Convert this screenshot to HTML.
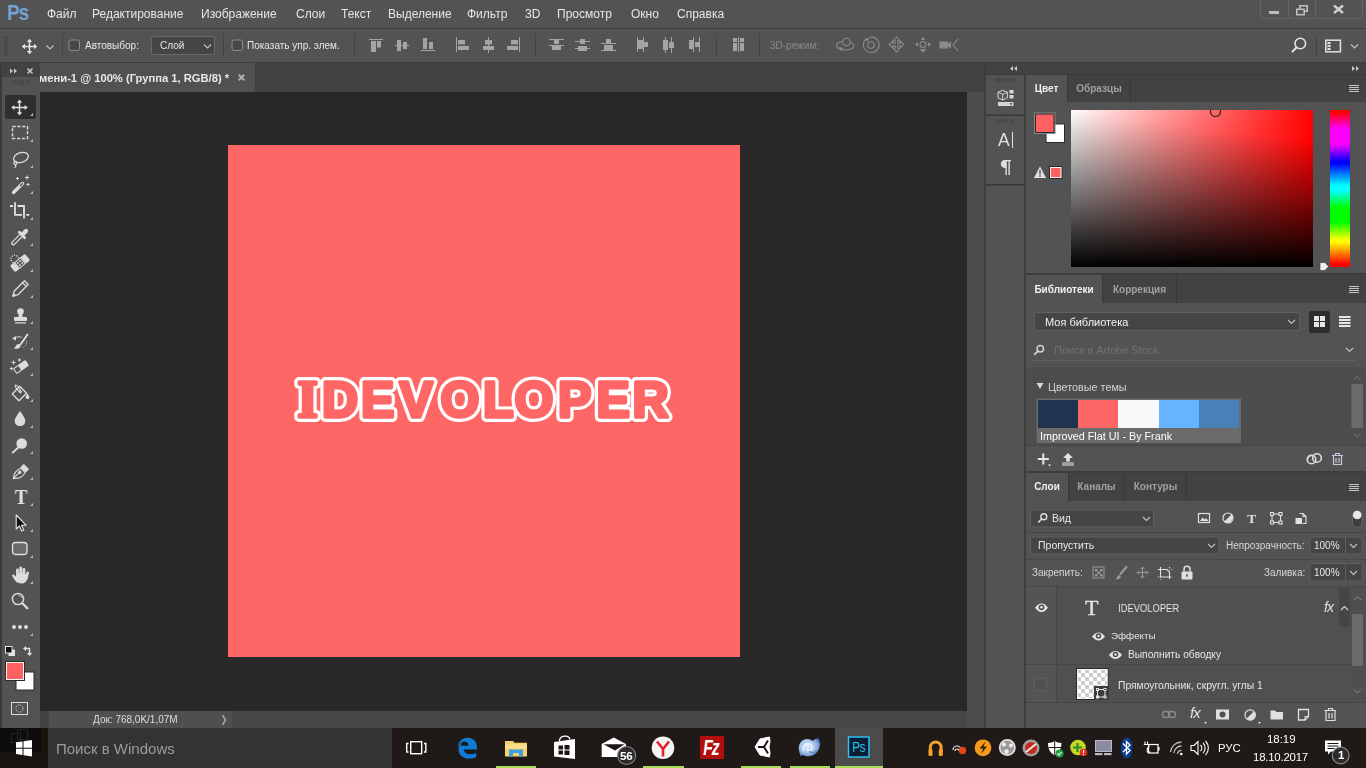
<!DOCTYPE html>
<html lang="ru"><head><meta charset="utf-8"><title>Photoshop</title>
<style>
*{box-sizing:border-box;margin:0;padding:0}
html,body{width:1366px;height:768px;overflow:hidden;background:#535353;font-family:"Liberation Sans","DejaVu Sans",sans-serif;color:#dcdcdc;font-size:11px}
.abs{position:absolute}
svg{display:block;overflow:visible}
#app{position:relative;width:1366px;height:768px;overflow:hidden;background:#535353}
.t,#menubar span,.ptab,#pslogo,#status .info span{will-change:transform}
.t{position:absolute;white-space:nowrap;line-height:1}
/* menu bar */
#menubar{left:0;top:0;width:1366px;height:29px;background:#535353;border-bottom:1px solid #3c3c3c}
#menubar span{position:absolute;top:7px;font-size:12px;color:#e6e6e6;white-space:nowrap;line-height:14px}
#pslogo{position:absolute;left:6.8px;top:1px;font-size:21.5px;font-weight:bold;color:#76a5d6;letter-spacing:-1px;line-height:24px;transform:scaleX(.88);transform-origin:0 0}
/* options bar */
#optbar{left:0;top:29px;width:1366px;height:34px;background:#535353;border-bottom:1px solid #3c3c3c}
#optbar .t{top:12px;font-size:10px;color:#e6e6e6}
.sep{position:absolute;width:1px;background:#464646;top:5px;height:23px}
.cb{position:absolute;width:11px;height:11px;border:1px solid #8a8a8a;border-radius:2px;background:#4a4a4a}
/* document */
#tabbar{left:0;top:63px;width:985px;height:29px;background:#424242}
#doctab{left:40px;top:63px;width:215px;height:29px;background:#515151}
#doctab .t{left:-1px;top:10px;font-size:11.2px;font-weight:bold;color:#e8e8e8}
#canvasarea{left:40px;top:92px;width:927px;height:619px;background:#282828}
#vscroll{left:967px;top:92px;width:17px;height:636px;background:#4c4c4c}
#doc{left:228px;top:145px;width:512px;height:512px;background:#ff6666}
#status{left:40px;top:711px;width:927px;height:17px;background:#474747}
#status .info{position:absolute;left:9px;top:0;width:183px;height:17px;background:#4f4f4f}
#status .info span{position:absolute;left:44px;top:4px;font-size:10px;line-height:10px;color:#dcdcdc;white-space:nowrap}
/* tools */
#tools{left:2px;top:64px;width:38px;height:664px;background:#535353}
#toolshead{left:2px;top:64px;width:38px;height:13px;background:#424242;border-radius:3px 3px 0 0}
/* right dock */
#dockhead{left:986px;top:63px;width:380px;height:12px;background:#424242}
#iconcol{left:986px;top:75px;width:38px;height:653px;background:#535353}
#dockgap{left:984px;top:63px;width:2px;height:665px;background:#3e3e3e}
#dockgap2{left:1024px;top:75px;width:2px;height:653px;background:#3e3e3e}
.panel{left:1026px;width:340px;background:#535353}
.ptabs{position:absolute;left:0;top:0;width:340px;height:27px;background:#424242}
.ptab{position:absolute;top:0;height:27px;font-size:10px;line-height:12px;font-weight:bold;color:#a0a0a0;border-right:1px solid #383838;padding-top:8px;text-align:center;white-space:nowrap}
.ptab.act{background:#535353;color:#f0f0f0}
/* taskbar */
#taskbar{left:0;top:728px;width:1366px;height:40px;background:#1f1a17}
.pmenu{position:absolute;left:323px;width:10px;height:7px;background:linear-gradient(to bottom,#c4c4c4 0,#c4c4c4 1px,transparent 1px,transparent 2px,#c4c4c4 2px,#c4c4c4 3px,transparent 3px,transparent 4px,#c4c4c4 4px,#c4c4c4 5px,transparent 5px,transparent 6px,#c4c4c4 6px,#c4c4c4 7px)}
</style></head><body><div id="app">
<!-- MENU BAR -->
<div id="menubar" class="abs">
<div id="pslogo">Ps</div>
<span style="left:47px">Файл</span><span style="left:92px">Редактирование</span><span style="left:201px">Изображение</span><span style="left:296px">Слои</span><span style="left:341px">Текст</span><span style="left:388px">Выделение</span><span style="left:467px">Фильтр</span><span style="left:525px">3D</span><span style="left:557px">Просмотр</span><span style="left:631px">Окно</span><span style="left:677px">Справка</span>
<svg class="abs" style="left:1255px;top:0" width="111" height="22" viewBox="1255 0 111 22" fill="none">
 <path d="M1260.500 -1v15q0 4.500 4.500 4.500h93q4.500 0 4.500-4.500v-15" stroke="#646464" stroke-width="1"/>
 <path d="M1288.500 0v18M1315.500 0v18" stroke="#646464" stroke-width="1"/>
 <rect x="1269" y="11" width="10" height="3" fill="#bdbdbd"/>
 <g stroke="#bdbdbd" stroke-width="1.600"><rect x="1299.800" y="5.800" width="7.400" height="5.400"/><rect x="1296.800" y="9.300" width="7.400" height="5.400" fill="#535353"/></g>
 <path d="M1334 5.500l9 7.500M1343 5.500l-9 7.500" stroke="#d0d0d0" stroke-width="2.400"/>
</svg>
</div>

<!-- OPTIONS BAR -->
<div id="optbar" class="abs">
<svg class="abs" style="left:0;top:0" width="1366" height="33" viewBox="0 29 1366 33" fill="none">
 <!-- grip -->
 <g stroke="#444" stroke-width="1"><path d="M4 36.500h4M4 38.500h4M4 40.500h4M4 42.500h4M4 44.500h4M4 46.500h4M4 48.500h4M4 50.500h4M4 52.500h4M4 54.500h4"/></g>
 <!-- move icon -->
 <g stroke="#e2e2e2" stroke-width="1.500" fill="#e2e2e2">
  <path d="M29.500 41v11M24 46.500h11"/>
  <path d="M29.500 38.700l2.700 3.300h-5.400zM29.500 54.300l2.700-3.300h-5.400zM21.700 46.500l3.300-2.700v5.400zM37.300 46.500l-3.300-2.700v5.400z" stroke="none"/>
 </g>
 <path d="M46.500 45.500l3.500 3.500 3.500-3.500" stroke="#c4c4c4" stroke-width="1.100"/>
 <!-- separators -->
 <g stroke="#444444" stroke-width="1"><path d="M62.500 34v22M223.500 34v22M354.500 34v22M535.500 34v22M716.500 34v22M759.500 34v22M1316.500 35v21"/></g>
 <!-- checkbox 1 -->
 <rect x="69" y="40" width="10.500" height="10.500" rx="2" fill="#474747" stroke="#8c8c8c"/>
 <!-- dropdown -->
 <rect x="151.500" y="36.500" width="63" height="18" rx="2.500" fill="#454545" stroke="#696969"/>
 <path d="M204 44.500l3.500 3.500 3.500-3.500" stroke="#c4c4c4" stroke-width="1.100"/>
 <!-- checkbox 2 -->
 <rect x="232" y="40" width="10.500" height="10.500" rx="2" fill="#474747" stroke="#8c8c8c"/>
 <!-- align icons -->
 <g fill="#a4a4a4">
  <rect x="369" y="39" width="14" height="1"/><rect x="371" y="41" width="5" height="11"/><rect x="377" y="41" width="4" height="6.500"/>
  <rect x="395" y="45" width="14" height="1"/><rect x="397" y="40" width="4" height="11"/><rect x="403" y="42" width="4" height="7"/>
  <rect x="421" y="50" width="14" height="1"/><rect x="423" y="38" width="4" height="11"/><rect x="429" y="42" width="4" height="7"/>
  <rect x="456" y="37" width="1" height="15"/><rect x="458" y="40" width="7" height="4.500"/><rect x="458" y="46" width="11" height="4"/>
  <rect x="488" y="37" width="1" height="16"/><rect x="485" y="40" width="7" height="4.500"/><rect x="483" y="46" width="11" height="4"/>
  <rect x="519" y="37" width="1" height="15"/><rect x="511" y="40" width="7" height="4.500"/><rect x="507" y="46" width="11" height="4"/>
  <!-- distribute -->
  <rect x="549" y="39" width="15" height="1"/><rect x="549" y="45" width="15" height="1"/><rect x="554" y="40" width="5" height="4"/><rect x="552" y="46" width="9" height="4"/>
  <rect x="575" y="41" width="15" height="1"/><rect x="575" y="48" width="15" height="1"/><rect x="580" y="39" width="5" height="5"/><rect x="578" y="46" width="9" height="5"/>
  <rect x="601" y="43" width="15" height="1"/><rect x="601" y="50" width="15" height="1"/><rect x="606" y="39" width="5" height="4"/><rect x="604" y="45" width="9" height="5"/>
  <rect x="637" y="37" width="1" height="15"/><rect x="643" y="37" width="1" height="15"/><rect x="638" y="40" width="5" height="9"/><rect x="644" y="42" width="4" height="5"/>
  <rect x="665" y="37" width="1" height="16"/><rect x="671" y="37" width="1" height="16"/><rect x="663" y="40" width="5" height="10"/><rect x="669" y="42" width="5" height="6"/>
  <rect x="693" y="37" width="1" height="15"/><rect x="699" y="37" width="1" height="15"/><rect x="689" y="40" width="4" height="9"/><rect x="695" y="42" width="4" height="5"/>
  <!-- auto-align -->
  <rect x="733" y="38" width="4" height="4"/><rect x="733" y="43" width="4" height="8"/><rect x="738" y="37" width="1" height="15"/><rect x="740" y="38" width="4" height="4"/><rect x="740" y="43" width="4" height="8"/>
 </g>
 <!-- 3D mode icons -->
 <g stroke="#8c8c8c" stroke-width="1.100">
  <circle cx="846.500" cy="42" r="3.700"/>
  <path d="M843 41.500c-4 .5-6.500 2-6.500 4 0 2.600 4 4.500 9 4.500s8.500-2 8.500-4.200c0-1.300-1.300-2.600-3.800-3.400"/>
  <path d="M839 47l4.500 1-2 3z" fill="#8c8c8c" stroke="none"/>
  <circle cx="871" cy="45" r="3.300"/>
  <path d="M866 39c-3 2.500-3.500 7-1 10.500 2.800 3.500 7.800 4 11 1.500 3.500-2.800 4-7.800 1.500-11-2-2.600-5.500-3.600-8.500-2.500"/>
  <path d="M865 38l4 .5-1.500 3.500z" fill="#8c8c8c" stroke="none"/>
  <path d="M896.500 37l3.300 3.700h-2v2.500h2.500v-2l3.700 3.300-3.700 3.300v-2h-2.500v2.500h2l-3.300 3.700-3.300-3.700h2v-2.500h-2.500v2l-3.700-3.300 3.700-3.300v2h2.500v-2.500h-2z"/>
  <circle cx="923" cy="44.500" r="3"/>
  <path d="M923 37l2.300 3h-4.600zM915 44.500l3-2.300v4.600zM931 44.500l-3-2.300v4.600zM923 53l3.300-4h-6.600z" fill="#8c8c8c" stroke="none"/>
  <rect x="940" y="42" width="7.500" height="6" fill="#8c8c8c"/><path d="M947.500 45l3-2.500v5z" fill="#8c8c8c"/>
  <path d="M958 39l-5 6 5 6"/>
 </g>
 <!-- search -->
 <circle cx="1300.300" cy="43.500" r="5.300" stroke="#e2e2e2" stroke-width="1.600"/><path d="M1296.500 47.500l-4 4" stroke="#e2e2e2" stroke-width="2" stroke-linecap="round"/>
 <!-- workspace -->
 <rect x="1325.800" y="40.200" width="14.600" height="11.600" stroke="#e2e2e2" stroke-width="1.500"/>
 <rect x="1327.500" y="42" width="3" height="8" fill="#e2e2e2"/><path d="M1327.500 44.500h3M1327.500 47.500h3" stroke="#535353" stroke-width="1"/>
 <path d="M1351 44.500l3.500 3.500 3.500-3.500" stroke="#c4c4c4" stroke-width="1.100"/>
</svg>
<span class="t" style="left:85px">Автовыбор:</span>
<span class="t" style="left:160px">Слой</span>
<span class="t" style="left:247px">Показать упр. элем.</span>
<span class="t" style="left:770px;color:#8a8a8a">3D-режим:</span>
</div>
<!-- DOCUMENT AREA -->
<div id="tabbar" class="abs"></div>
<div class="abs" style="left:0;top:63px;width:2px;height:665px;background:#3a3a3a"></div>
<div id="doctab" class="abs"><span class="t">мени-1 @ 100% (Группа 1, RGB/8) *</span><svg class="abs" style="left:198px;top:11px" width="7" height="7" viewBox="0 0 7 7"><path d="M.8 .8l5.400 5.400M6.200 .8l-5.400 5.400" stroke="#b0b0b0" stroke-width="2"/></svg></div>
<div id="canvasarea" class="abs"></div>
<div id="vscroll" class="abs"></div>
<div id="doc" class="abs"></div>
<svg class="abs" style="left:228px;top:145px;will-change:transform" width="512" height="512" viewBox="228 145 512 512">
 <g font-family="'Liberation Sans',sans-serif" font-weight="bold" font-size="50px" stroke-linejoin="round" stroke-linecap="round">
  <text id="outl" y="417" x="297.500 322 361 399.500 440.500 483 514.500 558 596.500 632.500" fill="#ffffff" stroke="#ffffff" stroke-width="10"><tspan font-family="'Liberation Serif',serif" font-size="52px">I</tspan>DEVOLOPER</text>
  <text id="inn" y="417" x="297.500 322 361 399.500 440.500 483 514.500 558 596.500 632.500" fill="#ff6666" stroke="#ff6666" stroke-width="3.600"><tspan font-family="'Liberation Serif',serif" font-size="52px">I</tspan>DEVOLOPER</text>
 </g>
</svg>
<div id="status" class="abs"><div class="abs" style="left:0;top:0;width:9px;height:17px;background:#424242"></div><div class="info"><span>Док: 768,0K/1,07M</span><svg class="abs" style="left:172px;top:3px" width="6" height="12" viewBox="0 0 6 12"><path d="M1.500 1l3 5-3 5" stroke="#c8c8c8" stroke-width="1.100" fill="none"/></svg></div></div>
<!-- TOOLS PANEL -->
<div id="tools" class="abs"></div>
<div id="toolshead" class="abs"></div>
<svg class="abs" style="left:0;top:60px" width="42" height="668" viewBox="0 60 42 668" fill="none" stroke="none">
 <!-- header chevrons + close -->
 <g fill="#c8c8c8"><path d="M10 68.5l3 2.5-3 2.5zM14 68.5l3 2.5-3 2.5z"/></g>
 <path d="M27.5 68.5l5 5M32.5 68.5l-5 5" stroke="#c8c8c8" stroke-width="1.6"/>
 <!-- grip -->
 <g stroke="#444" stroke-width="1"><path d="M11.5 80v5M13.5 80v5M15.5 80v5M17.5 80v5M19.5 80v5M21.5 80v5M23.5 80v5M25.5 80v5M27.5 80v5M29.5 80v5"/></g>
 <!-- active tool bg -->
 <rect x="5" y="95" width="31" height="24" rx="2.5" fill="#2f2f2f"/>
 <!-- corner triangles -->
 <g fill="#b9b9b9">
  <path d="M33 113v3h-3zM33 139v3h-3zM33 165v3h-3zM33 191v3h-3zM33 217v3h-3zM33 243v3h-3zM33 269v3h-3zM33 295v3h-3zM33 321v3h-3zM33 347v3h-3zM33 373v3h-3zM33 399v3h-3zM33 425v3h-3zM33 451v3h-3zM33 477v3h-3zM33 503v3h-3zM33 529v3h-3zM33 555v3h-3zM33 581v3h-3zM33 633v3h-3z"/>
 </g>
 <!-- 1 move -->
 <g stroke="#e2e2e2" stroke-width="1.5" fill="#e2e2e2">
  <path d="M19.5 101.5v12M13 107.5h13" />
  <path d="M19.5 99.5l2.6 3.2h-5.2zM19.5 115.5l2.6-3.2h-5.2zM11.2 107.5l3.2-2.6v5.2zM27.8 107.5l-3.2-2.6v5.2z" stroke="none"/>
 </g>
 <!-- 2 marquee -->
 <rect x="12.5" y="126.500" width="15" height="12" stroke="#dcdcdc" stroke-width="1.4" stroke-dasharray="3.2 1.7" />
 <!-- 3 lasso -->
 <g stroke="#dcdcdc" stroke-width="1.3">
  <ellipse cx="21" cy="157.500" rx="7.600" ry="4.800" transform="rotate(-18 21 157.500)"/>
  <circle cx="15.300" cy="163" r="1.500"/>
  <path d="M15.500 164.500c.8 1.500 0 2.500-1 3"/>
 </g>
 <!-- 4 wand -->
 <g>
  <path d="M13.500 192.500l9-9" stroke="#dcdcdc" stroke-width="3.400" stroke-linecap="round"/>
  <path d="M20.300 185.700l2-2" stroke="#535353" stroke-width="1.400" stroke-linecap="round"/>
  <g stroke="#dcdcdc" stroke-width="1"><path d="M27 175.500v4M25 177.500h4M17.500 177v3M16 178.500h3M28 183v3M26.500 184.500h3"/></g>
 </g>
 <!-- 5 crop -->
 <g stroke="#e2e2e2" stroke-width="1.800">
  <path d="M10 206h3M15 202.300v12.500h7M17.500 206h6.500v12.500M26.200 214.800h3"/>
 </g>
 <!-- 6 eyedropper -->
 <g>
  <path d="M13.300 243.200l8-8" stroke="#dcdcdc" stroke-width="4.400" stroke-linecap="round"/>
  <path d="M13.500 243l7.500-7.500" stroke="#535353" stroke-width="1.900" stroke-linecap="round"/>
  <path d="M19.300 232.300l5.400 5.400" stroke="#dcdcdc" stroke-width="2.800" stroke-linecap="round"/>
  <path d="M23 234l3-3" stroke="#dcdcdc" stroke-width="4.200" stroke-linecap="round"/>
 </g>
 <!-- 7 healing -->
 <g>
  <circle cx="14.700" cy="259" r="3.800" stroke="#e6e6e6" stroke-width="1.300" stroke-dasharray="1.100 1.290"/>
  <g transform="rotate(-39 20 263)">
   <rect x="10.300" y="258.800" width="19.400" height="8.400" rx="1.600" fill="#dcdcdc"/>
   <rect x="15.800" y="258.300" width="8.400" height="9.400" fill="#535353"/>
   <rect x="16.300" y="259.300" width="7.400" height="7.400" stroke="#dcdcdc" stroke-width="1"/>
   <g fill="#e6e6e6"><circle cx="18.500" cy="261.500" r=".95"/><circle cx="21.500" cy="261.500" r=".95"/><circle cx="18.500" cy="264.500" r=".95"/><circle cx="21.500" cy="264.500" r=".95"/></g>
  </g>
 </g>
 <!-- 8 pencil -->
 <g stroke="#dcdcdc" stroke-width="1.300" stroke-linejoin="round">
  <path d="M13 296l1.300-5 10.200-10.200 3.700 3.700-10.200 10.200z"/>
  <path d="M22.600 282.700l3.700 3.700"/>
  <path d="M13 296l2-.5-1.500-1.500z" fill="#dcdcdc"/>
 </g>
 <!-- 9 stamp -->
 <g fill="#dcdcdc">
  <circle cx="20.500" cy="311.500" r="3.300"/>
  <path d="M19 313h3l.6 4.500h-4.200z"/>
  <rect x="14" y="317" width="13" height="4" rx="1"/>
  <rect x="15" y="322.300" width="11" height="1.200"/>
 </g>
 <!-- 10 history brush -->
 <g>
  <path d="M27.500 334.500l-7 10" stroke="#dcdcdc" stroke-width="2" stroke-linecap="round"/>
  <path d="M13.500 348.500c2-.3 2-3.700 4.500-4.500 1.500-.3 3 1 2.500 2.500-.8 2.300-4 2.800-7 2z" fill="#dcdcdc"/>
  <path d="M12 338.500l4-2.500v4.500z" fill="#dcdcdc"/>
  <path d="M15 338c2-1.300 4.500-1.500 6.500-.8" stroke="#dcdcdc" stroke-width="1"/>
  <path d="M26.500 341c.5 2.500-.8 5-3 6.500" stroke="#dcdcdc" stroke-width="1" stroke-dasharray="1 1.300"/>
 </g>
 <!-- 11 magic eraser -->
 <g>
  <g transform="rotate(-36 21 367)">
   <rect x="13.300" y="363.600" width="15.400" height="6.800" rx="1.600" fill="#dcdcdc"/>
   <rect x="14.400" y="364.700" width="5" height="4.600" rx=".8" fill="#535353"/>
  </g>
  <g stroke="#dcdcdc" stroke-width="1"><path d="M13.500 360.500v4M11.500 362.500h4M19.500 358.300v3.400M17.800 360h3.400M11.500 367v3.200M9.900 368.600h3.200"/></g>
 </g>
 <!-- 12 bucket -->
 <g stroke="#dcdcdc" stroke-width="1.300" stroke-linejoin="round">
  <path d="M12.300 394l7.400-7.700 6.900 6.900-7.600 7.600z"/>
  <ellipse cx="17.800" cy="388.300" rx="1.200" ry="4" transform="rotate(-38 17.800 388.300)" stroke-width="1.100"/>
  <circle cx="20.300" cy="391.800" r=".9" fill="#dcdcdc"/>
  <path d="M27.500 393.600c1.200 1.800 1.900 2.800 1.900 3.700 0 2.400-3.800 2.400-3.800 0 0-.9.700-1.900 1.900-3.700z" fill="#dcdcdc" stroke="none"/>
 </g>
 <!-- 13 blur drop -->
 <path d="M20 411c2.700 4 5.300 7 5.300 10 0 3-2.400 5-5.300 5s-5.300-2-5.300-5c0-3 2.600-6 5.300-10z" fill="#dcdcdc"/>
 <!-- 14 dodge -->
 <g><circle cx="21.700" cy="443.500" r="5.300" fill="#dcdcdc"/><path d="M12.800 452.500l6-5.500" stroke="#dcdcdc" stroke-width="1.800" stroke-linecap="round"/></g>
 <!-- 15 pen -->
 <g stroke="#dcdcdc" stroke-width="1.200" stroke-linejoin="round">
  <path d="M13.300 478.700c.5-5.500 2.500-8.700 7.500-10.500l4.200 4.200c-1.800 5-5.500 6.300-11.700 6.300z"/>
  <path d="M13.300 478.700l6-6"/>
  <circle cx="19.800" cy="472.300" r="1.100" fill="#dcdcdc"/>
  <path d="M21.200 467.300l2.600-2.600 4.500 4.500-2.600 2.600z" fill="#dcdcdc"/>
 </g>
 <!-- 17 path select arrow -->
 <path d="M16.200 515v14l3.300-3 2.200 5 2-.9-2.200-4.900h4.500z" fill="#111" stroke="#e6e6e6" stroke-width="1.100" stroke-linejoin="round"/>
 <!-- 18 rounded rect -->
 <rect x="12.500" y="542.500" width="14.500" height="12" rx="3.200" fill="#6a6a6a" stroke="#e2e2e2" stroke-width="1.300"/>
 <!-- 19 hand -->
 <g fill="#dcdcdc">
  <rect x="16.100" y="568.500" width="2.800" height="10" rx="1.400"/>
  <rect x="19.300" y="566.500" width="2.800" height="12" rx="1.400"/>
  <rect x="22.500" y="568" width="2.800" height="11" rx="1.400"/>
  <rect x="25.600" y="571.300" width="2.600" height="9" rx="1.300" transform="rotate(14 26.900 576)"/>
  <ellipse cx="21.600" cy="578.200" rx="5.700" ry="5.400"/>
  <path d="M11.900 575.600c.4-1.200 1.700-1.500 2.500-.7l3.600 3.800v4.500c-2.300-1.500-4.500-4.500-6.100-7.600z"/>
  <path d="M16.100 574h11.300l-.5 5h-10.800z"/>
 </g>
 <!-- 20 zoom -->
 <g stroke="#dcdcdc"><circle cx="18" cy="599" r="5.600" stroke-width="1.500"/><path d="M22.300 603.300l5 5" stroke-width="2.300" stroke-linecap="round"/><path d="M18.500 595.300c1.700.2 2.800 1.200 3.200 2.700" stroke-width=".9"/></g>
 <!-- 21 dots -->
 <g fill="#dcdcdc"><circle cx="14" cy="627" r="2"/><circle cx="20" cy="627" r="2"/><circle cx="26" cy="627" r="2"/></g>
 <!-- default colors -->
 <rect x="8.500" y="649.500" width="6.500" height="6.500" fill="#e4e4e4"/>
 <rect x="5.500" y="646.500" width="6.500" height="6.500" fill="#111" stroke="#e4e4e4" stroke-width="1"/>
 <!-- swap arrows -->
 <g stroke="#e2e2e2" stroke-width="1.500" fill="none"><path d="M25 648.500h4.500v5"/></g>
 <path d="M23 648.500l3-2.600v5.200zM29.500 656l-2.600-3h5.200z" fill="#e2e2e2"/>
 <!-- bg / fg swatch -->
 <rect x="16" y="672" width="18" height="18" fill="#ffffff" stroke="#2a2a2a" stroke-width="1"/>
 <rect x="5.500" y="661.500" width="19" height="19" fill="#ff6163" stroke="#2a2a2a" stroke-width="1"/>
 <rect x="6.500" y="662.500" width="17" height="17" fill="none" stroke="#f4f4f4" stroke-width="1"/>
 <!-- quick mask -->
 <rect x="11.500" y="702.500" width="16" height="12" stroke="#dcdcdc" stroke-width="1"/>
 <circle cx="19.500" cy="708.500" r="3.600" stroke="#dcdcdc" stroke-width="1" stroke-dasharray="1 1.100"/>
</svg>
<!-- type tool T as real text -->
<div class="abs" style="left:14px;top:486px;width:14px;height:22px;font-family:'Liberation Serif',serif;font-size:20.500px;line-height:22px;color:#e2e2e2;text-align:center;font-weight:bold;transform:scaleX(.92);will-change:transform">T</div>
<!-- RIGHT DOCK -->
<div id="dockgap" class="abs"></div>
<div id="dockhead" class="abs"></div>
<div id="iconcol" class="abs"></div>
<div id="dockgap2" class="abs"></div>
<div class="abs" style="left:986px;top:74px;width:380px;height:1px;background:#3a3a3a"></div>
<svg class="abs" style="left:984px;top:63px" width="44" height="130" viewBox="984 63 44 130" fill="none">
 <path d="M1013 66l-3 2.500 3 2.500zM1017 66l-3 2.500 3 2.500z" fill="#c8c8c8"/>
 <g stroke="#444" stroke-width="1"><path d="M995.500 78v4M997.500 78v4M999.500 78v4M1001.500 78v4M1003.500 78v4M1005.500 78v4M1007.500 78v4M1009.500 78v4M1011.500 78v4M1013.500 78v4"/>
 <path d="M995.500 119v4M997.500 119v4M999.500 119v4M1001.500 119v4M1003.500 119v4M1005.500 119v4M1007.500 119v4M1009.500 119v4M1011.500 119v4M1013.500 119v4"/></g>
 <rect x="986" y="114.500" width="38" height="1.500" fill="#383838"/>
 <rect x="986" y="184" width="38" height="1.500" fill="#383838"/>
 <!-- 3D cube icon -->
 <g stroke="#d6d6d6" stroke-width="1" stroke-linejoin="round">
  <path d="M1002.700 90.300l4.700 2v5.500l-4.700 2.200-4.700-2.200v-5.500z"/><path d="M998 92.300l4.700 2 4.700-2M1002.700 94.300v5.700"/>
 </g>
 <rect x="1009.500" y="90" width="4" height="3.500" fill="#d6d6d6"/><rect x="1009.500" y="95" width="4" height="3.500" fill="#d6d6d6"/>
 <rect x="998" y="102" width="15.500" height="4" fill="#d6d6d6"/><path d="M1009.500 103.200h3l-1.500 2z" fill="#444"/>
 <!-- pilcrow -->
 <g fill="#e0e0e0"><path d="M1005 160h6v1.300h-1.200v13.700h-1.400v-13.700h-1.600v13.700h-1.400v-7c-3 0-4.600-1.800-4.600-4s1.600-4 4.200-4z"/></g>
</svg>
<div class="t" style="left:998px;top:132px;font-size:17.500px;color:#e0e0e0;line-height:17px">A</div>
<div class="abs" style="left:1012px;top:132px;width:1px;height:16px;background:#e0e0e0"></div>
<div class="abs" style="left:1351px;top:66px"><svg width="10" height="6" viewBox="0 0 10 6"><path d="M1 0l3 2.500-3 2.500zM5 0l3 2.500-3 2.500z" fill="#c8c8c8"/></svg></div>

<!-- COLOR PANEL -->
<div id="pcolor" class="panel abs" style="top:75px;height:198px">
 <div class="ptabs"><div class="ptab act" style="left:0;width:42px">Цвет</div><div class="ptab" style="left:42px;width:63px">Образцы</div></div>
 <div class="pmenu" style="top:10px"></div>
 <svg class="abs" style="left:0;top:0" width="0" height="0"><defs><filter id="satf" x="0" y="0" width="1" height="1" color-interpolation-filters="sRGB"><feColorMatrix type="matrix" values="1.24 -0.24 0 0 0  0 1 0 0 0  0 0 1 0 0  0 0 0 1 0"/></filter><filter id="huef" x="0" y="0" width="1" height="1" color-interpolation-filters="sRGB"><feColorMatrix type="saturate" values="1.6"/></filter></defs></svg>
 <div class="abs" style="left:45px;top:35px;width:242px;height:157px;background:linear-gradient(to bottom,rgba(0,0,0,0),#000),linear-gradient(to right,#fff,#f00);filter:url(#satf)"></div>
 <div class="abs" style="left:304px;top:35px;width:20px;height:157px;background:linear-gradient(to bottom,#ff0000 0%,#ff00ff 16.600%,#0000ff 33.300%,#00ffff 50%,#00ff00 66.600%,#ffff00 83.300%,#ff0000 100%);filter:url(#huef)"></div>
 <svg class="abs" style="left:0;top:27px" width="340" height="171" viewBox="1026 102 340 171" fill="none">
  <rect x="1046" y="124" width="18.500" height="18.500" fill="#fff" stroke="#2a2a2a"/>
  <rect x="1034.500" y="113" width="20.500" height="20.500" fill="#2a2a2a" stroke="#8a8a8a"/>
  <rect x="1036" y="114.500" width="17.500" height="17.500" fill="#ff6163"/>
  <path d="M1040 166.300l6 11.700h-12z" fill="#e0e0e0"/><path d="M1040 170v4.300M1040 175.300v1.400" stroke="#535353" stroke-width="1.500"/>
  <rect x="1049.500" y="166.500" width="12.500" height="12" fill="#ff6163" stroke="#2a2a2a"/>
  <rect x="1050.500" y="167.500" width="10.500" height="10" stroke="#f0f0f0"/>
  <clipPath id="cf"><rect x="1071" y="110" width="242" height="157"/></clipPath><circle cx="1215.500" cy="111.500" r="5" stroke="#1e1e1e" stroke-width="1.100" clip-path="url(#cf)"/>
  <path d="M1321 262.500h4l3.500 4-3.500 4h-4q-1 0-1-1v-6q0-1 1-1z" fill="#ededed" stroke="#3a3a3a" stroke-width=".6"/>
 </svg>
</div>
<div class="abs" style="left:1026px;top:273px;width:340px;height:2px;background:#3c3c3c"></div>

<!-- LIBRARIES PANEL -->
<div id="plib" class="panel abs" style="top:275px;height:196px">
 <div class="ptabs" style="height:28px"><div class="ptab act" style="left:0;width:77px;height:28px;padding-top:9px">Библиотеки</div><div class="ptab" style="left:77px;width:74px;height:28px;padding-top:9px">Коррекция</div></div>
 <div class="pmenu" style="top:11px"></div>
 <div class="abs" style="left:0;top:92px;width:340px;height:78px;background:#4d4d4d"></div>
 <div class="abs" style="left:0;top:170px;width:340px;height:1px;background:#454545"></div>
 <svg class="abs" style="left:0;top:28px" width="340" height="168" viewBox="1026 303 340 168" fill="none">
  <rect x="1034.500" y="312.500" width="265" height="18" rx="2.500" fill="#454545" stroke="#606060"/>
  <path d="M1288 320l3.500 3.500 3.500-3.500" stroke="#c4c4c4" stroke-width="1.100"/>
  <rect x="1309" y="311" width="21" height="22" rx="2" fill="#2d2d2d"/>
  <g fill="#e6e6e6"><rect x="1314" y="316" width="5" height="5"/><rect x="1320" y="316" width="5" height="5"/><rect x="1314" y="322" width="5" height="5"/><rect x="1320" y="322" width="5" height="5"/>
  <rect x="1339" y="316" width="11.500" height="2"/><rect x="1339" y="319" width="11.500" height="2"/><rect x="1339" y="322" width="11.500" height="2"/><rect x="1339" y="325" width="11.500" height="2"/></g>
  <circle cx="1040.300" cy="348.700" r="3.200" stroke="#d0d0d0" stroke-width="1.500"/><path d="M1038 351l-3.200 3.200" stroke="#d0d0d0" stroke-width="1.800" stroke-linecap="round"/>
  <path d="M1346 348l3.500 3.500 3.500-3.500" stroke="#c4c4c4" stroke-width="1.100"/>
  <rect x="1033" y="360" width="324" height="1" fill="#616161"/>
  <path d="M1036.500 383h7l-3.500 6z" fill="#d8d8d8"/>
  <!-- theme tile -->
  <rect x="1036.500" y="398.500" width="204.500" height="44.500" fill="#6b6b6b"/>
  <rect x="1038" y="400" width="40" height="28" fill="#21344f"/><rect x="1078" y="400" width="40" height="28" fill="#ff6666"/><rect x="1118" y="400" width="41" height="28" fill="#f8f9fb"/><rect x="1159" y="400" width="40" height="28" fill="#66b3ff"/><rect x="1199" y="400" width="40" height="28" fill="#4a80b8"/>
  <!-- scrollbar -->
  <path d="M1353.500 380l3.500-3.500 3.500 3.500" stroke="#7a7a7a" stroke-width="1"/>
  <rect x="1351.500" y="384" width="11.500" height="44" fill="#6b6b6b"/>
  <path d="M1353.500 433.500l3.500 3.500 3.500-3.500" stroke="#7a7a7a" stroke-width="1"/>
  <!-- toolbar -->
  <path d="M1043.300 453.500v11M1037.800 459h11" stroke="#e6e6e6" stroke-width="2"/><path d="M1048 464.500h3l-1.500 2z" fill="#e6e6e6"/>
  <g fill="#e6e6e6"><path d="M1068 453l5 5h-3.200v3.500h-3.600v-3.500h-3.200z"/><rect x="1062" y="462.500" width="12" height="1"/><rect x="1062" y="464.500" width="12" height="1"/></g>
  <g stroke="#dcdcdc" stroke-width="1.600"><circle cx="1311.500" cy="459.500" r="4.300"/><circle cx="1317" cy="458" r="4.300"/><path d="M1307.500 459.500a4 4 0 014-4"/></g>
  <g stroke="#cfc4dc" stroke-width="1.200"><path d="M1332 455.500h11M1335.500 455.500v-2h4v2M1333.500 456v8.500h8v-8.500M1336 458v5M1339 458v5"/></g>
 </svg>
 <span class="t" style="left:19px;top:42px;font-size:11px;color:#f2f2f2">Моя библиотека</span>
 <span class="t" style="left:28px;top:70px;font-size:11px;color:#727272">Поиск в Adobe Stock</span>
 <span class="t" style="left:22px;top:107px;font-size:10.800px;color:#d2d2d2">Цветовые темы</span>
 <span class="t" style="left:14px;top:156px;font-size:10.750px;color:#ffffff">Improved Flat UI - By Frank</span>
</div>
<div class="abs" style="left:1026px;top:471px;width:340px;height:2px;background:#3c3c3c"></div>
<!-- LAYERS PANEL -->
<div id="players" class="panel abs" style="top:473px;height:255px">
 <div class="ptabs" style="height:28px"><div class="ptab act" style="left:0;width:43px;height:28px">Слои</div><div class="ptab" style="left:43px;width:56px;height:28px">Каналы</div><div class="ptab" style="left:99px;width:62px;height:28px">Контуры</div></div>
 <div class="pmenu" style="top:11px"></div>
 <!-- list backgrounds -->
 <div class="abs" style="left:0;top:114px;width:340px;height:115px;background:#505050"></div>
 <div class="abs" style="left:0;top:114px;width:31px;height:115px;background:#545454;border-right:1px solid #484848"></div>
 <div class="abs" style="left:0;top:191px;width:324px;height:1px;background:#464646"></div>
 <div class="abs" style="left:324px;top:114px;width:16px;height:115px;background:#4f4f4f"></div>
 <div class="abs" style="left:313px;top:115px;width:11px;height:39px;background:#464646"></div>
 <svg class="abs" style="left:0;top:28px" width="340" height="227" viewBox="1026 501 340 227" fill="none">
  <!-- filter dropdown -->
  <rect x="1030.500" y="510" width="123" height="17" rx="2.500" fill="#454545" stroke="#5f5f5f"/>
  <circle cx="1043.800" cy="516.700" r="3" stroke="#dcdcdc" stroke-width="1.400"/><path d="M1041.700 519l-3 3" stroke="#dcdcdc" stroke-width="1.700" stroke-linecap="round"/>
  <path d="M1143 517l3.500 3.500 3.500-3.500" stroke="#c4c4c4" stroke-width="1.100"/>
  <!-- filter icons -->
  <rect x="1198.500" y="513.500" width="11" height="9" stroke="#e0e0e0" stroke-width="1.200"/><path d="M1200 521l2.500-3.500 2 2 1.500-1.500 2.500 3z" fill="#e0e0e0"/>
  <circle cx="1228" cy="518" r="5" stroke="#e0e0e0" stroke-width="1.200"/><path d="M1231.500 514.500a5 5 0 01-7 7z" fill="#e0e0e0"/>
  <g stroke="#e0e0e0" stroke-width="1.100"><rect x="1272" y="514" width="8.500" height="8.500"/><g fill="#535353"><rect x="1270.500" y="512.500" width="3" height="3"/><rect x="1279" y="512.500" width="3" height="3"/><rect x="1270.500" y="521" width="3" height="3"/><rect x="1279" y="521" width="3" height="3"/></g></g>
  <path d="M1299.500 513.500h3.500l3 3v7h-3.500M1303 513.500v3h3" stroke="#e0e0e0" stroke-width="1.100" stroke-linejoin="round"/><rect x="1295.500" y="518" width="6.500" height="6" fill="#e0e0e0"/>
  <!-- toggle -->
  <rect x="1352.500" y="510.500" width="9.500" height="17" rx="4.700" fill="#3e3e3e" stroke="#666"/><circle cx="1357.200" cy="515" r="4.300" fill="#e8e8e8"/>
  <rect x="1026" y="532" width="340" height="1" fill="#474747"/>
  <!-- blend dropdown -->
  <rect x="1030.500" y="537" width="188.500" height="17" rx="2.500" fill="#454545" stroke="#5f5f5f"/>
  <path d="M1208 544l3.500 3.500 3.500-3.500" stroke="#c4c4c4" stroke-width="1.100"/>
  <rect x="1310" y="537" width="52" height="17" rx="2" fill="#454545" stroke="#5f5f5f"/><path d="M1345.500 537v17" stroke="#5f5f5f"/>
  <path d="M1350 544l3.500 3.500 3.500-3.500" stroke="#c4c4c4" stroke-width="1.100"/>
  <rect x="1026" y="559" width="340" height="1" fill="#474747"/>
  <!-- lock row -->
  <g fill="#9a9a9a"><rect x="1093" y="567" width="11" height="11" fill="none" stroke="#9a9a9a"/><rect x="1095" y="569" width="2.500" height="2.500"/><rect x="1100" y="569" width="2.500" height="2.500"/><rect x="1097.500" y="571.500" width="2.500" height="2.500"/><rect x="1095" y="574" width="2.500" height="2.500"/><rect x="1100" y="574" width="2.500" height="2.500"/></g>
  <path d="M1126.500 567l-6 7" stroke="#9a9a9a" stroke-width="2" stroke-linecap="round"/><path d="M1115.500 579c1.500-.5 1.500-3 3-3.700 1.500-.5 2.700.7 2.200 2-.7 1.800-3 2.200-5.200 1.700z" fill="#9a9a9a"/>
  <g stroke="#9a9a9a" stroke-width="1"><path d="M1142.500 567.500v10M1137.500 572.500h10"/><path d="M1140.500 569l2-2 2 2M1140.500 576l2 2 2-2M1139 570.500l-2 2 2 2M1146 570.500l2 2-2 2"/></g>
  <g stroke="#e0e0e0" stroke-width="1.100"><path d="M1158 569.500h9l2.500 2.500v7M1160.500 567v10h11"/><path d="M1158 577h2.500M1169.500 567v2.500M1160.500 579v.8M1171.500 569.500h.8" stroke-dasharray="1 .8"/></g>
  <rect x="1181.500" y="571.500" width="11" height="8" rx="1" fill="#e0e0e0"/><path d="M1184 571.500v-2.200a3 3 0 016 0v2.200" stroke="#e0e0e0" stroke-width="1.500"/><rect x="1186.200" y="574.300" width="1.600" height="2.400" fill="#505050"/>
  <rect x="1310" y="563.500" width="52" height="17.500" rx="2" fill="#454545" stroke="#5f5f5f"/><path d="M1345.500 563.500v17.500" stroke="#5f5f5f"/>
  <path d="M1350 571l3.500 3.500 3.500-3.500" stroke="#c4c4c4" stroke-width="1.100"/>
  <rect x="1026" y="586" width="340" height="1" fill="#474747"/>
  <!-- eyes -->
  <g id="eye1"><path d="M1035 607.800q6.500-8.500 13 0q-6.500 8.500-13 0z" fill="#e6e6e6"/><circle cx="1041.500" cy="607.300" r="2.900" fill="#505050"/><circle cx="1041.500" cy="607.300" r="1.300" fill="#e6e6e6"/></g>
  <g><path d="M1092 636.500q6.500-8 13 0q-6.500 8-13 0z" fill="#e6e6e6"/><circle cx="1098.500" cy="636" r="2.800" fill="#505050"/><circle cx="1098.500" cy="636" r="1.200" fill="#e6e6e6"/></g>
  <g><path d="M1109 655q6.500-8 13 0q-6.500 8-13 0z" fill="#e6e6e6"/><circle cx="1115.500" cy="654.500" r="2.800" fill="#505050"/><circle cx="1115.500" cy="654.500" r="1.200" fill="#e6e6e6"/></g>
  <path d="M1341 610l3.500-3.500 3.500 3.500" stroke="#d0d0d0" stroke-width="1.200"/>
  <!-- layer 2 -->
  <rect x="1034.500" y="678.500" width="12" height="12" fill="#505050" stroke="#5e5e5e"/>
  <defs><pattern id="chk" x="1077" y="669" width="8" height="8" patternUnits="userSpaceOnUse"><rect width="8" height="8" fill="#fff"/><rect width="4" height="4" fill="#ccc"/><rect x="4" y="4" width="4" height="4" fill="#ccc"/></pattern></defs>
  <rect x="1076.500" y="668.500" width="31.500" height="31" fill="url(#chk)" stroke="#2a2a2a"/>
  <rect x="1077.500" y="669.500" width="29.500" height="29" stroke="#f4f4f4"/>
  <rect x="1094" y="686" width="14.500" height="14" fill="#3c3c3c"/>
  <g stroke="#e6e6e6" stroke-width="1"><rect x="1097.500" y="689.500" width="7.500" height="7.500"/><g fill="#3c3c3c"><rect x="1096.500" y="688.500" width="2" height="2"/><rect x="1104" y="688.500" width="2" height="2"/><rect x="1096.500" y="696" width="2" height="2"/><rect x="1104" y="696" width="2" height="2"/></g></g>
  <!-- scrollbar -->
  <path d="M1354 600l3.500-3.500 3.500 3.500" stroke="#8a8a8a" stroke-width="1"/>
  <rect x="1352" y="614" width="11" height="52" fill="#6b6b6b"/>
  <path d="M1354 689.500l3.500 3.500 3.500-3.500" stroke="#8a8a8a" stroke-width="1"/>
  <!-- bottom toolbar -->
  <rect x="1026" y="702" width="340" height="1" fill="#454545"/>
  <g stroke="#8c8c8c" stroke-width="1.300"><rect x="1162.500" y="711.500" width="7" height="6" rx="3"/><rect x="1168.500" y="711.500" width="7" height="6" rx="3"/></g>
  <rect x="1216" y="709.500" width="13" height="10" fill="#e0e0e0"/><circle cx="1222.500" cy="714.500" r="3" fill="#505050"/>
  <circle cx="1250.200" cy="715" r="5.200" stroke="#e0e0e0" stroke-width="1.200"/><path d="M1253.900 711.300a5.200 5.200 0 01-7.400 7.400z" fill="#e0e0e0"/>
  <path d="M1204 722h3l-1.500 2zM1258 722h3l-1.500 2z" fill="#e0e0e0"/>
  <path d="M1270.500 710.500h4.500l1.500 1.500h6.500v7.500h-12.500z" fill="#e0e0e0"/>
  <path d="M1298.500 709.500h10v7l-3.500 3.500h-6.500z" stroke="#e0e0e0" stroke-width="1.300"/><path d="M1308.500 716.500h-3.500v3.500" stroke="#e0e0e0" stroke-width="1.100"/>
  <g stroke="#e0e0e0" stroke-width="1.200"><path d="M1324.500 710.500h11.500M1328.500 710.500v-2h4v2M1326 711v9.500h9v-9.500M1329 713v5.500M1332 713v5.500"/></g>
 </svg>
 <!-- texts -->
 <span class="t" style="left:26px;top:40px;font-size:10.500px;color:#e6e6e6">Вид</span>
 <svg class="abs" style="left:219px;top:38px;will-change:transform" width="16" height="16" viewBox="0 0 16 16"><text x="2.300" y="12" font-family="'Liberation Serif',serif" font-weight="bold" font-size="13.500px" fill="#e0e0e0">T</text></svg>
 <span class="t" style="left:12px;top:67px;font-size:10.500px;color:#e6e6e6">Пропустить</span>
 <span class="t" style="left:200px;top:68px;font-size:10px;color:#d6d6d6">Непрозрачность:</span>
 <span class="t" style="left:288px;top:68px;font-size:10px;color:#e6e6e6">100%</span>
 <span class="t" style="left:6px;top:95px;font-size:10px;color:#d6d6d6">Закрепить:</span>
 <span class="t" style="left:238px;top:95px;font-size:10px;color:#d6d6d6">Заливка:</span>
 <span class="t" style="left:288px;top:95px;font-size:10px;color:#e6e6e6">100%</span>
 <span class="t" style="left:58.500px;top:124px;font-family:'Liberation Serif',serif;font-size:22px;color:#e0e0e0;line-height:22px;-webkit-text-stroke:.45px #e0e0e0">T</span>
 <span class="t" style="left:92px;top:130px;font-size:10.500px;color:#e6e6e6;transform:scaleX(.895);transform-origin:0 0">IDEVOLOPER</span>
 <span class="t" style="left:298px;top:127px;font-size:14px;font-style:italic;color:#e0e0e0;letter-spacing:-1px">fx</span>
 <span class="t" style="left:85px;top:158px;font-size:9.800px;color:#e6e6e6">Эффекты</span>
 <span class="t" style="left:102px;top:177px;font-size:10.200px;color:#e6e6e6">Выполнить обводку</span>
 <span class="t" style="left:92px;top:208px;font-size:10.300px;color:#e6e6e6">Прямоугольник, скругл. углы 1</span>
 <span class="t" style="left:164px;top:232px;font-size:15px;font-style:italic;color:#e0e0e0;letter-spacing:-1px">fx</span>
</div>
<!-- WINDOWS TASKBAR -->
<div id="taskbar" class="abs">
 <div class="abs" style="left:0;top:0;width:48px;height:40px;background:#1a1411"></div>
 <div class="abs" style="left:0;top:0;width:41px;height:24px;background:#0e0d0d"></div>
 <div class="abs" style="left:48px;top:0;width:344px;height:40px;background:#333333"></div>
 <div class="abs" style="left:835px;top:0;width:48px;height:40px;background:#4b4b4b"></div>
 <span class="t" style="left:56px;top:12px;font-size:15px;color:#9b9b9b;line-height:17px">Поиск в Windows</span>
 <svg class="abs" style="left:0;top:0" width="1366" height="40" viewBox="0 728 1366 40" fill="none">
  <!-- faint overlapping squares behind start -->
  <g stroke="#222020" stroke-width="1"><rect x="11.500" y="733.500" width="9" height="9"/><rect x="17.500" y="729.500" width="10" height="10"/></g>
  <!-- windows logo -->
  <path d="M16 742.300l6.500-.9v6.300h-6.500zM23.500 741.200l8.500-1.200v7.700h-8.500zM16 748.700h6.500v6.300l-6.500-.9zM23.500 748.700h8.500v7.700l-8.500-1.200z" fill="#ffffff"/>
  <!-- task view -->
  <g stroke="#ffffff" stroke-width="1.400"><rect x="410.700" y="741.700" width="11" height="12"/><path d="M408.500 743.500h-1.800v8.500h1.800M424 743.500h1.800v8.500h-1.800"/></g>
  <!-- edge -->
  <path d="M457.500 747.500c.5-6 5-9.700 10.200-9.700 5.800 0 9.300 4.300 9.300 9.800v2h-13.300c.3 3 2.800 4.700 6.300 4.700 2.400 0 4.500-.6 6.200-1.600v4.300c-2 1-4.300 1.500-7 1.500-6.500 0-10.700-3.700-10.700-9.300 0-3.700 2-6.600 5-8.200-1.600 1.300-2.500 3-2.700 4.700h7.600c0-2.300-1.300-4.200-4.200-4.200-2.800 0-5.300 2-6.700 6z" fill="#0f7bd7"/>
  <!-- explorer -->
  <path d="M505 741h8l1.500 1.800h12.500v13.700h-22z" fill="#f6d06a"/><path d="M505 744.500h22v4h-22z" fill="#fbe08f"/><path d="M509 749.500h14v7h-4v-3.500h-6v3.500h-4z" fill="#3c9fe3"/>
  <rect x="496" y="766" width="40" height="2" fill="#a5dc58"/>
  <!-- store -->
  <path d="M554 742l21-3v20l-21-2.500z" fill="#ffffff"/><path d="M559.500 741c0-6 9.500-6.500 10.500-1.500" stroke="#ffffff" stroke-width="1.300"/>
  <g fill="#1a1513"><rect x="558.500" y="745.500" width="4.500" height="4"/><rect x="564.500" y="745" width="5" height="4.500"/><rect x="558.500" y="750.500" width="4.500" height="4"/><rect x="564.500" y="750.500" width="5" height="4.500"/></g>
  <!-- mail -->
  <path d="M601.700 744l12.100-6.500 12.100 6.500v13h-24.200z" fill="#ffffff"/><path d="M603.500 744.300h21l-9.500 6.200z" fill="#1a1513"/>
  <circle cx="626.600" cy="755.500" r="9" fill="#2b2b2b" stroke="#8a8a8a" stroke-width="1.100"/>
  <!-- yandex -->
  <circle cx="663" cy="747.700" r="11.300" fill="#f4f4f4"/><path d="M657 741.500l6 7.500 6-7.500M663 748.500v8" stroke="#e8202a" stroke-width="2.600"/>
  <rect x="643" y="766" width="41" height="2" fill="#a5dc58"/>
  <!-- filezilla -->
  <rect x="700" y="736" width="24" height="23" fill="#b40f0f"/>
  <!-- unity -->
  <path d="M755 747l5-8 9.500-2 .5 4.500-1 5.500 1 5.500-.5 4.500-9.500-2z" fill="#ffffff" stroke="#ffffff" stroke-width="1" stroke-linejoin="round"/><path d="M758 747h6M764 747l4-6.500M764 747l4 6.500" stroke="#1a1513" stroke-width="1.900"/>
  <rect x="741" y="766" width="40" height="2" fill="#a5dc58"/>
  <!-- blue swirl -->
  <defs><radialGradient id="swg" cx="0.42" cy="0.45" r="0.62"><stop offset="0" stop-color="#e4ecfb"/><stop offset=".55" stop-color="#a9c4ec"/><stop offset=".85" stop-color="#6f97d3"/><stop offset="1" stop-color="#35558f"/></radialGradient></defs>
  <path d="M799 750.500c-1.500-6 2.500-11.500 8-11.500 2.500 0 4.300.8 5.800 2 1.700-1.800 4-3 6.200-3 1.800 4.500 1.500 9.500-1.500 13.500-3 3.800-7.500 5.300-11 4.800-1.500-.2-2.800-.6-3.800-1.300l-2.200 1.500c-.6-2-.9-4-1.500-6z" fill="url(#swg)"/>
  <path d="M803.500 750.500c-1-3.800 1.800-7 5-6.800 3.200.2 4.800 3.600 3 6-1.400 1.800-4.200 1.300-4.300-.8" stroke="#f4f8ff" stroke-width="1.400" stroke-linecap="round" opacity=".9"/>
  <path d="M809.500 751.500c2 2 5.500 1.500 7.200-1" stroke="#5f86c6" stroke-width="1.200" stroke-linecap="round"/>
  <rect x="790" y="766" width="40" height="2" fill="#a5dc58"/>
  <!-- photoshop -->
  <rect x="848.500" y="737" width="20.500" height="20" fill="#0b1f33" stroke="#2ec7fb" stroke-width="1.400"/>
  <rect x="835" y="766" width="48" height="2" fill="#a5dc58"/>
  <!-- tray: headphones -->
  <path d="M930.300 752v-4.500a5.400 5.400 0 0110.800 0v4.500" stroke="#f5a12c" stroke-width="3"/><rect x="928.500" y="749" width="4" height="7" rx="1.500" fill="#f5a12c"/><rect x="938.800" y="749" width="4" height="7" rx="1.500" fill="#f5a12c"/>
  <!-- small w/ red dot -->
  <path d="M953 750a4 4 0 018 0M955 751a2 2 0 014 0" stroke="#e8e8e8" stroke-width="1.200"/><circle cx="962.500" cy="750.500" r="3.700" fill="#e8421c"/>
  <!-- orange bolt -->
  <circle cx="983" cy="747.800" r="8.400" fill="#f59a1b"/><path d="M985.500 741.500l-6 7h3.500l-2 5.500 6-7.500h-3.500z" fill="#3a2205"/>
  <!-- gray circle -->
  <circle cx="1007.300" cy="747.500" r="8.500" fill="#e0e0e0"/><circle cx="1007.300" cy="747.500" r="6.800" fill="#9a9a9a"/><circle cx="1004" cy="744.500" r="2" fill="#f0f0f0"/><circle cx="1011" cy="745.500" r="2" fill="#f0f0f0"/><circle cx="1006.500" cy="751.500" r="2.200" fill="#f0f0f0"/>
  <!-- red/gray round -->
  <circle cx="1031" cy="748" r="8.500" fill="#a0a0a0"/><circle cx="1031" cy="748" r="6" fill="#c8281c"/><path d="M1026 752l10-8" stroke="#e8e8e8" stroke-width="2"/>
  <!-- defender -->
  <path d="M1048 743c3 0 5-1 6.700-2.300 1.700 1.300 3.700 2.300 6.700 2.300 0 6-2.200 10-6.700 12.300-4.500-2.300-6.700-6.300-6.700-12.300z" fill="#ffffff"/><path d="M1054.700 741v14M1048.500 747.500h12.500" stroke="#1a1513" stroke-width="1"/>
  <circle cx="1059.500" cy="753.500" r="4" fill="#21a045"/><path d="M1057.500 753.500l1.500 1.500 2.500-3" stroke="#fff" stroke-width="1.100"/>
  <!-- yellow-green -->
  <circle cx="1078" cy="747.500" r="7.800" fill="#c6d624"/><path d="M1073 747.500h9M1077.500 743v9" stroke="#2e8a2e" stroke-width="2.200"/><circle cx="1083.500" cy="752.500" r="3.800" fill="#e02a1c"/><path d="M1083.500 750v3M1083.500 754v1" stroke="#fff" stroke-width="1.100"/>
  <!-- monitor -->
  <rect x="1095.500" y="740.500" width="16" height="11" fill="#8b8ba3" stroke="#b8b8c8"/><rect x="1095" y="753" width="7.500" height="2.200" fill="#b8b8c8"/><rect x="1104" y="753" width="7.500" height="2.200" fill="#b8b8c8"/>
  <!-- bluetooth -->
  <ellipse cx="1126.700" cy="748" rx="5.800" ry="10.500" fill="#0b3d91"/><path d="M1123 743.500l7 7-3.500 3.500v-12.500l3.500 3.500-7 7" stroke="#ffffff" stroke-width="1.300"/>
  <!-- battery plug -->
  <rect x="1148.500" y="744.500" width="9.500" height="8.500" stroke="#ffffff" stroke-width="1.200"/><rect x="1158" y="747" width="1.500" height="3.500" fill="#fff"/><path d="M1145 741.500v3M1147.500 741.500v3M1143.800 744.500h5v2.500l-1.500 1.500v3.500h3" stroke="#ffffff" stroke-width="1.100"/>
  <!-- wifi -->
  <g stroke="#bdbdbd" stroke-width="1.300"><path d="M1170.500 752a11 11 0 0111-10"/><path d="M1174 753a7.500 7.500 0 017.500-7"/><path d="M1177.500 754a4 4 0 014-3.700"/></g><circle cx="1181.300" cy="754" r="1.300" fill="#ffffff"/>
  <!-- volume -->
  <path d="M1191 745.500h3l4-4v13l-4-4h-3z" stroke="#ffffff" stroke-width="1.100"/><g stroke="#ffffff" stroke-width="1.100"><path d="M1200.500 745a4 4 0 010 6"/><path d="M1203 743a7 7 0 010 10"/><path d="M1205.500 741a10 10 0 010 14"/></g>
  <!-- action center -->
  <path d="M1325 740.500h16v11h-10l-3 3v-3h-3z" fill="#ffffff"/><path d="M1327.500 743.500h11M1327.500 746h11M1327.500 748.500h7" stroke="#1a1513" stroke-width="1"/>
  <circle cx="1340.700" cy="755.500" r="8.400" fill="#2b2b2b" stroke="#8a8a8a" stroke-width="1.200"/>
 </svg>
 <span class="t" style="left:620.300px;top:21.500px;font-size:11.700px;font-weight:bold;color:#ffffff;letter-spacing:-0.3px">56</span>
 <span class="t" style="left:703px;top:9px;font-size:22px;line-height:22px;font-weight:bold;font-style:italic;color:#ffffff;letter-spacing:-2px;transform:scaleX(.74);transform-origin:0 0">Fz</span>
 <span class="t" style="left:852px;top:12px;font-size:14px;color:#2ec7fb;letter-spacing:-0.3px;transform:scaleX(.84);transform-origin:0 0">Ps</span>
 <span class="t" style="left:1218px;top:14.500px;font-size:11.300px;color:#ffffff">РУС</span>
 <span class="t" style="left:1266.500px;top:5.500px;font-size:11.400px;color:#ffffff">18:19</span>
 <span class="t" style="left:1253px;top:23.500px;font-size:11.400px;color:#ffffff;letter-spacing:-0.2px">18.10.2017</span>
 <span class="t" style="left:1337.500px;top:22px;font-size:11.500px;font-weight:bold;color:#ffffff">1</span>
</div>
</div></body></html>
